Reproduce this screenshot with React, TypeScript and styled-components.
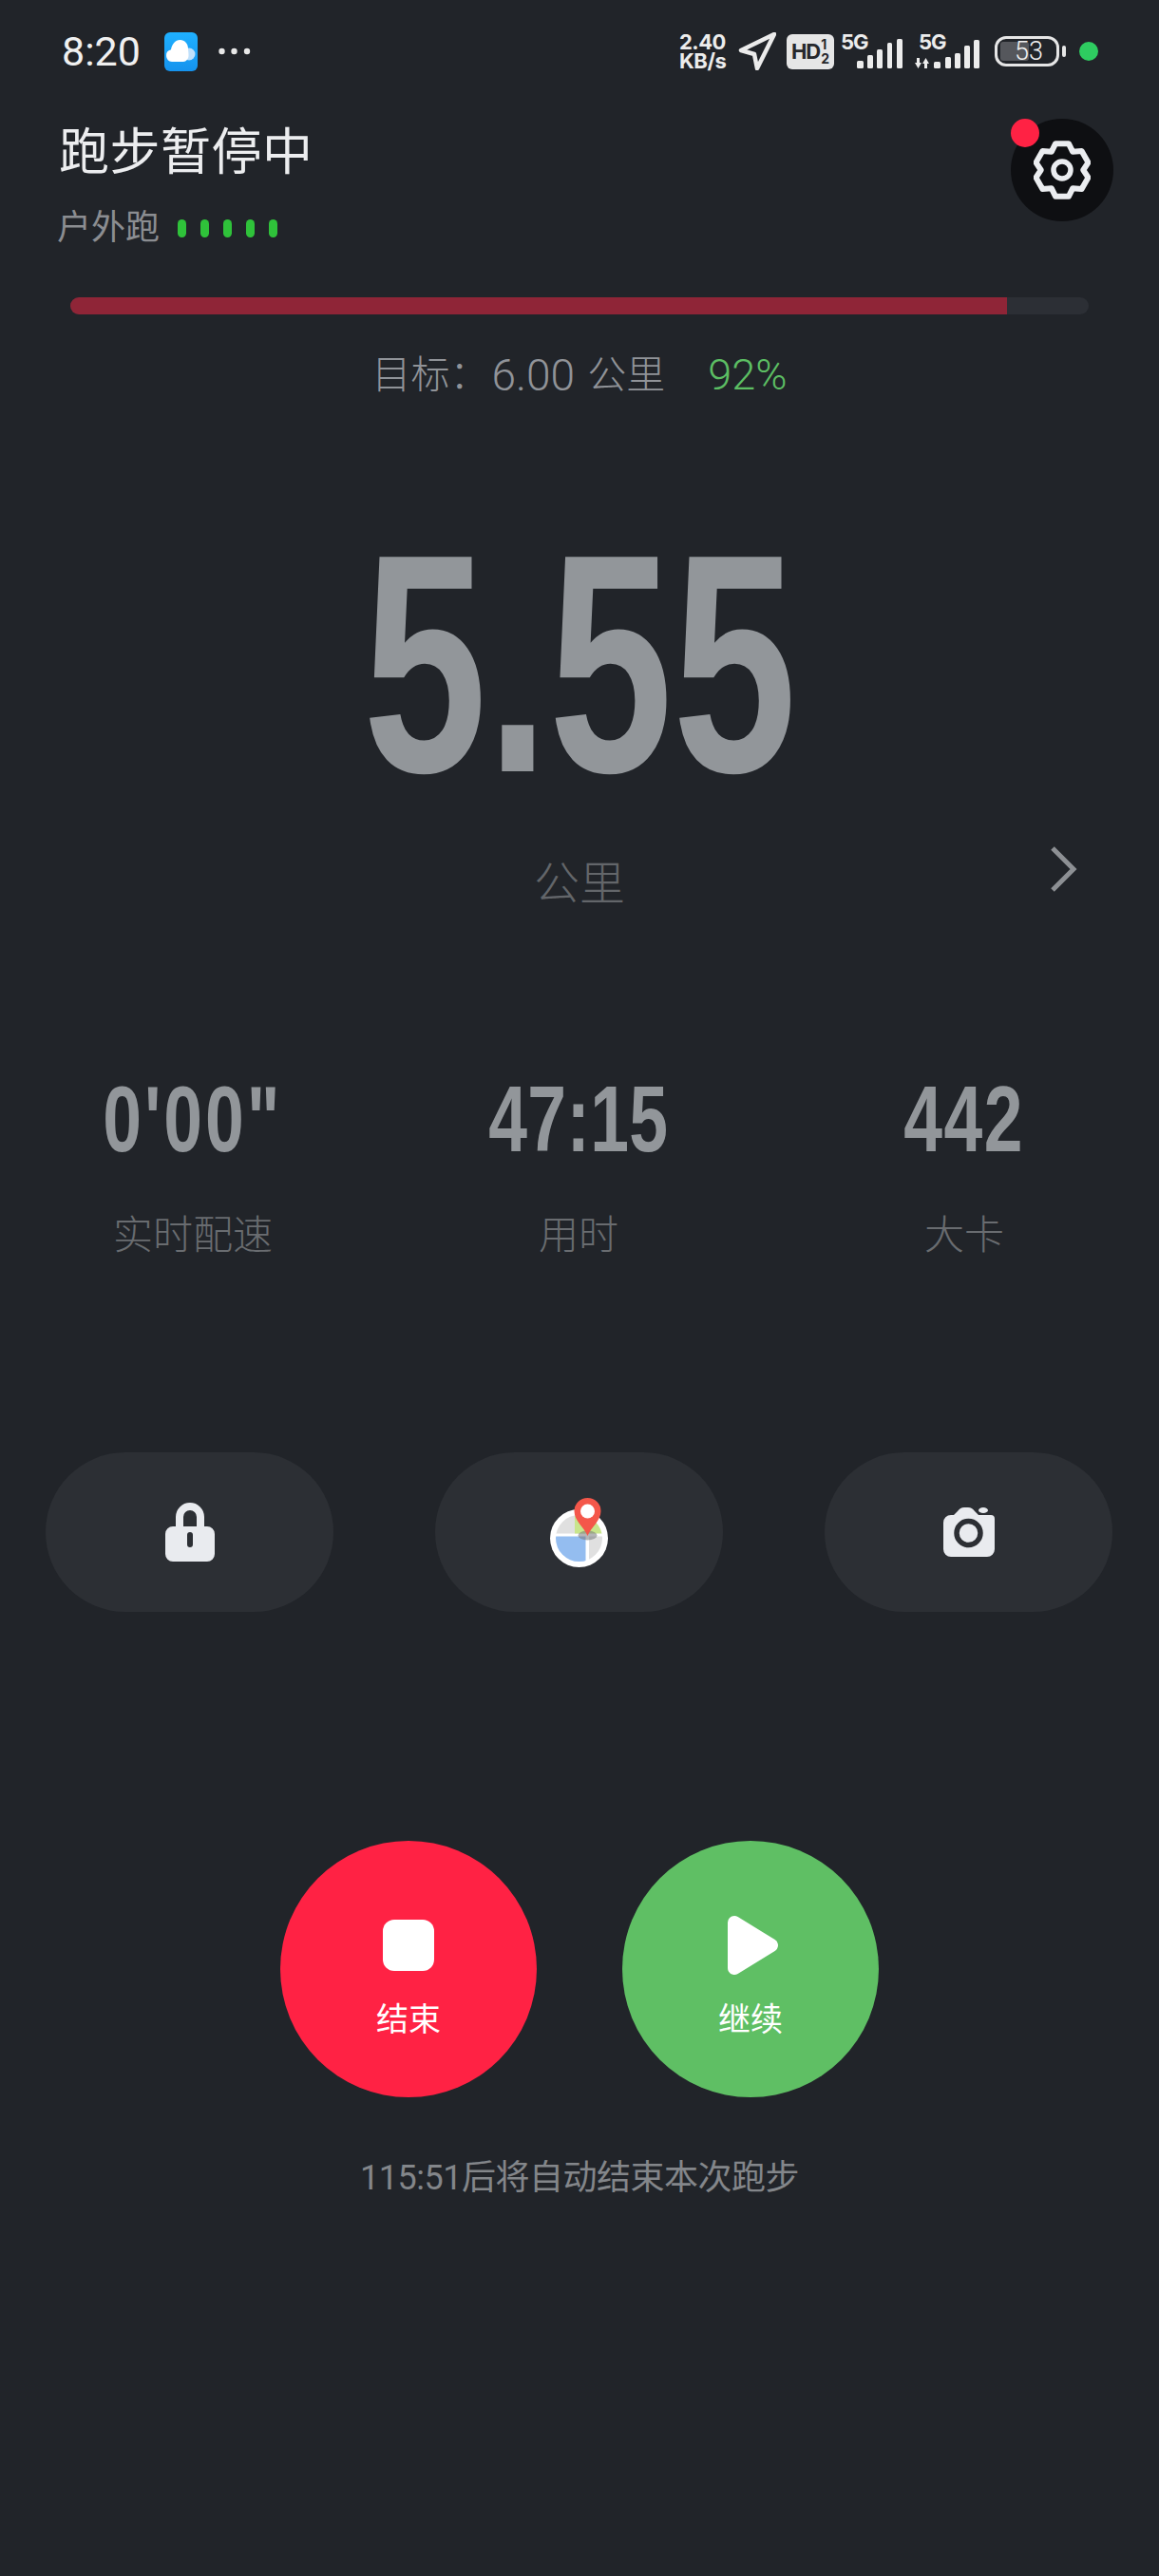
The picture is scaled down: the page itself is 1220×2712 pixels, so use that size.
import React from "react";
import styled, { createGlobalStyle } from "styled-components";

const GlobalStyle = createGlobalStyle`
  html, body {
    margin: 0;
    padding: 0;
    background: #212429;
  }
`;

const CJK = `Roboto, "Noto Sans CJK SC", sans-serif`;

const Page = styled.div`
  width: 1220px;
  height: 2712px;
  overflow: hidden;
  background: #212429;
  font-family: ${CJK};
  color: #8d9094;
`;

/* status bar */
const StatusBar = styled.div`
  height: 125px;
  box-sizing: border-box;
  padding: 0 64px 17px 65px;
  display: flex;
  align-items: center;
  justify-content: space-between;
`;
const StatusLeft = styled.div`
  display: flex;
  align-items: center;
`;
const Time = styled.span`
  font-size: 43px;
  color: #f0f0f0;
  width: 108px;
  line-height: 50px;
`;
const StatusRight = styled.div`
  display: flex;
  align-items: center;
`;
const Speed = styled.div`
  width: 53px;
  margin-right: 9px;
  font-family: Inter, sans-serif;
  font-weight: 700;
  color: #ececec;
  font-size: 22px;
  line-height: 20px;
  letter-spacing: -0.5px;
  white-space: nowrap;
`;
const HdBox = styled.div`
  width: 50px;
  height: 37px;
  margin: 0 7px 0 11px;
  border-radius: 6px;
  background: #e6e6e6;
  color: #26282c;
  display: flex;
  align-items: center;
  justify-content: center;
  gap: 1px;
  font-family: Inter, sans-serif;
  font-weight: 700;
`;
const HdText = styled.span`
  font-size: 22px;
  letter-spacing: -1px;
`;
const HdStack = styled.span`
  display: flex;
  flex-direction: column;
  font-size: 14px;
  line-height: 15px;
`;
const SignalGroup = styled.div<{ $w: number; $labelLeft: number; $gap: number }>`
  position: relative;
  width: ${(p) => p.$w}px;
  height: 36px;
  margin-right: ${(p) => p.$gap}px;

  span {
    position: absolute;
    left: ${(p) => p.$labelLeft}px;
    top: -4px;
    font-family: Inter, sans-serif;
    font-weight: 700;
    font-size: 22px;
    line-height: 24px;
    letter-spacing: -1px;
    color: #ececec;
  }
  svg {
    position: absolute;
    left: 0;
    bottom: 0;
  }
`;
const Battery = styled.div`
  position: relative;
  width: 68px;
  height: 32px;
  box-sizing: border-box;
  border: 3.5px solid #e6e6e6;
  border-radius: 12px;
  display: flex;
  align-items: center;
  justify-content: center;
  font-size: 27px;
  font-weight: 300;
  color: #f0f0f0;
  padding-left: 4px;
`;
const BatteryFill = styled.div`
  position: absolute;
  left: 3px;
  top: 3px;
  bottom: 3px;
  width: 30px;
  border-radius: 3px;
  background: #55575c;
`;
const BatteryLevel = styled.span`
  position: relative;
  line-height: 26px;
`;
const BatteryNub = styled.div`
  width: 4px;
  height: 12px;
  margin: 0 14px 0 3px;
  border-radius: 2px;
  background: #e6e6e6;
`;
const GreenDot = styled.div`
  width: 20px;
  height: 20px;
  border-radius: 50%;
  background: #2ecc60;
`;

/* header */
const Header = styled.div`
  display: flex;
  justify-content: space-between;
  align-items: flex-start;
  padding: 0 48px 0 62px;
`;
const Title = styled.h1`
  margin: 4px 0 0;
  font-size: 53px;
  line-height: 64px;
  font-weight: 400;
  letter-spacing: 0.5px;
  color: #ecedef;
`;
const SubRow = styled.div`
  display: flex;
  align-items: center;
  margin: 25px 0 0 -2px;
`;
const SubLabel = styled.span`
  font-size: 36px;
  line-height: 44px;
  color: #8b8d91;
`;
const Pips = styled.div`
  display: flex;
  gap: 15px;
  margin-left: 19px;
`;
const Pip = styled.i`
  display: block;
  width: 9px;
  height: 19px;
  border-radius: 5px;
  background: #2fc23a;
`;
const SettingsButton = styled.div`
  position: relative;
  width: 108px;
  height: 108px;
  border-radius: 50%;
  background: #0e0f12;
  display: flex;
  align-items: center;
  justify-content: center;
`;
const RedBadge = styled.div`
  position: absolute;
  left: 0;
  top: 0;
  width: 30px;
  height: 30px;
  border-radius: 50%;
  background: #ff2244;
`;

/* goal */
const ProgressTrack = styled.div`
  margin: 51px 74px 0;
  height: 18px;
  border-radius: 9px;
  background: #2c2f35;
  overflow: hidden;
`;
const ProgressFill = styled.div<{ $pct: number }>`
  width: ${(p) => p.$pct}%;
  height: 100%;
  background: #8f2537;
`;
const GoalRow = styled.div`
  margin-top: 39px;
  height: 50px;
  display: flex;
  justify-content: center;
  align-items: center;
  font-size: 41px;
  font-weight: 300;
  line-height: 50px;
  color: #909398;
  white-space: pre;
`;
const GoalDigits = styled.span`
  font-size: 46px;
  margin: 0 2px 0 3px;
`;
const GoalPct = styled.span`
  margin-left: 45px;
  font-size: 45px;
  color: #5cbe63;
`;

/* main distance */
const Distance = styled.div`
  margin-top: 124px;
  height: 310px;
  display: flex;
  justify-content: center;
  align-items: center;
`;
const Condensed = styled.span<{ $size: number; $x: number; $spacing?: number }>`
  display: inline-block;
  font-family: "Liberation Sans", Arial, sans-serif;
  font-weight: 700;
  font-size: ${(p) => p.$size}px;
  line-height: 1;
  letter-spacing: ${(p) => p.$spacing || 0}px;
  color: #92969a;
  transform: scaleX(${(p) => p.$x});
  white-space: nowrap;
`;
const UnitRow = styled.div`
  margin-top: 36px;
  display: grid;
  grid-template-columns: 1fr auto 1fr;
  align-items: center;
`;
const Unit = styled.span`
  font-size: 48px;
  line-height: 64px;
  font-weight: 300;
  color: #63666a;
`;
const ChevronCell = styled.div`
  justify-self: end;
  display: flex;
  padding: 0 86px 32px 0;
`;

/* stats */
const Stats = styled.div`
  margin-top: 161px;
  display: grid;
  grid-template-columns: repeat(3, 406px);
`;
const Stat = styled.div`
  display: flex;
  flex-direction: column;
  align-items: center;
`;
const StatValue = styled.div`
  height: 88px;
  display: flex;
  align-items: center;
`;
const StatLabel = styled.div`
  margin-top: 55px;
  font-size: 42px;
  line-height: 50px;
  font-weight: 300;
  color: #696c70;
`;

/* shortcut pills */
const PillRow = styled.div`
  margin-top: 203px;
  padding: 0 49px 0 48px;
  display: flex;
  justify-content: space-between;
`;
const Pill = styled.div`
  width: 303px;
  height: 168px;
  border-radius: 84px;
  background: #2c2f34;
  display: flex;
  align-items: center;
  justify-content: center;
`;

/* end / resume */
const Actions = styled.div`
  margin-top: 241px;
  display: flex;
  justify-content: center;
  gap: 90px;
`;
const ActionButton = styled.div<{ $bg: string }>`
  width: 270px;
  height: 270px;
  border-radius: 50%;
  background: ${(p) => p.$bg};
  box-sizing: border-box;
  padding-top: 78px;
  display: flex;
  flex-direction: column;
  align-items: center;
`;
const ActionIcon = styled.div`
  height: 64px;
  display: flex;
  align-items: center;
  justify-content: center;
`;
const ActionLabel = styled.div`
  margin-top: 26px;
  font-size: 34px;
  line-height: 40px;
  color: #fff;
`;
const Notice = styled.div`
  margin-top: 60px;
  text-align: center;
  font-size: 36px;
  line-height: 50px;
  letter-spacing: -0.5px;
  color: #83868a;
`;

const gearPath = (() => {
  const pts: string[] = [];
  for (let k = 0; k < 6; k++) {
    const a = k * 60 - 90;
    [
      [21, -30],
      [27, -14],
      [27, 14],
      [21, 30],
    ].forEach(([r, d]) => {
      const t = ((a + d) * Math.PI) / 180;
      pts.push(`${(30 + r * 1.06 * Math.cos(t)).toFixed(1)} ${(32 + r * 1.06 * Math.sin(t)).toFixed(1)}`);
    });
  }
  return "M" + pts.join("L") + "Z";
})();

const Gear = () => (
  <svg width="60" height="64" viewBox="0 0 60 64" fill="none" stroke="#ebedf0">
    <path d={gearPath} strokeWidth="6" strokeLinejoin="round" />
    <circle cx="30" cy="32" r="9" strokeWidth="5.5" />
  </svg>
);

const CloudApp = () => (
  <svg width="35" height="41" viewBox="0 0 35 41">
    <defs>
      <linearGradient id="cloudBg" x1="0" y1="0" x2="0" y2="1">
        <stop offset="0" stopColor="#1fb0ff" />
        <stop offset="1" stopColor="#1593ee" />
      </linearGradient>
    </defs>
    <rect width="35" height="41" rx="6" fill="url(#cloudBg)" />
    <circle cx="26" cy="23" r="6.5" fill="#bfe0fb" />
    <path d="M8 31a6.5 6.5 0 0 1-1-12.8C8 12.5 11.5 8 16.500 8c5 0 8.500 4 8.500 9 0 2 .5 4 .5 7.500S23 31 20 31Z" fill="#fff" />
  </svg>
);

const MoreDots = () => (
  <svg width="34" height="8" viewBox="0 0 34 8" style={{ marginLeft: 22 }} fill="#e8e8e8">
    <circle cx="3.500" cy="4" r="3.200" />
    <circle cx="16.500" cy="4" r="3.200" />
    <circle cx="30" cy="4" r="3.200" />
  </svg>
);

const LocationArrow = () => (
  <svg width="40" height="40" viewBox="0 0 40 40" fill="none">
    <path d="M38 2 3 19l14 4 3 15Z" stroke="#ebebeb" strokeWidth="4.500" strokeLinejoin="round" />
  </svg>
);

const Bars = ({ bars, w, h, arrows }: { bars: [number, number, number][]; w: number; h: number; arrows?: boolean }) => (
  <svg width={w} height={h} viewBox={`0 0 ${w} ${h}`} fill="#ececec">
    {arrows && <path d={`M2 ${h - 11}h3v5h2l-3.500 6L0 ${h - 6}h2ZM11.500 ${h - 11}l3.500 6h-2v5h-3v-5H8Z`} />}
    {bars.map(([x, bw, bh]) => (
      <rect key={x} x={x} y={h - bh} width={bw} height={bh} rx="1.500" />
    ))}
  </svg>
);

const Chevron = () => (
  <svg width="30" height="50" viewBox="0 0 30 50" fill="none">
    <path d="M4 3 26 25 4 47" stroke="#8d9094" strokeWidth="5" />
  </svg>
);

const LockIcon = () => (
  <svg width="52" height="62" viewBox="0 0 52 62" fill="#e9ebef">
    <path
      fillRule="evenodd"
      d="M11 25V15a15 15 0 0 1 30 0v10h3a8 8 0 0 1 8 8v21a8 8 0 0 1-8 8H8a8 8 0 0 1-8-8V33a8 8 0 0 1 8-8ZM19 25h14V15a7 7 0 0 0-14 0ZM26 31a3 3 0 0 0-3 3v10a3 3 0 0 0 6 0V34a3 3 0 0 0-3-3Z"
    />
  </svg>
);

const CameraIcon = () => (
  <svg width="54" height="52" viewBox="0 0 54 52" fill="#e9ebef">
    <path d="M8 8h3l4-4c2-2.500 4-4 7-4h4c3 0 5 1.500 7 4l4 4h13a4 4 0 0 1 4 4v32a8 8 0 0 1-8 8H8a8 8 0 0 1-8-8V16a8 8 0 0 1 8-8Z" />
    <ellipse cx="42" cy="3" rx="5" ry="3" />
    <circle cx="26.500" cy="27" r="12.500" fill="none" stroke="#2c2f34" strokeWidth="5.500" />
  </svg>
);

const MapIcon = () => (
  <svg width="61" height="73" viewBox="0 0 61 73">
    <defs>
      <clipPath id="mapInner">
        <circle cx="30.500" cy="42.500" r="24.500" />
      </clipPath>
    </defs>
    <circle cx="30.500" cy="42.500" r="30.500" fill="#fff" />
    <g clipPath="url(#mapInner)">
      <rect x="0" y="10" width="37" height="27.500" fill="#e0e0e0" />
      <rect x="26" y="10" width="45" height="27.500" fill="#c8e58c" />
      <rect x="0" y="40.500" width="37.500" height="30" fill="#94bdf0" />
      <rect x="41" y="40.500" width="30" height="30" fill="#e0e0e0" />
    </g>
    <ellipse cx="39.500" cy="39.500" rx="10" ry="5" fill="#77797c" opacity="0.55" />
    <path d="M39.500 40C36 31 25.500 24 25.500 14a14 14 0 0 1 28 0C53.500 24 43 31 39.500 40Z" fill="#f4574a" />
    <circle cx="39.500" cy="14" r="7.500" fill="#fff" />
  </svg>
);

const StopIcon = () => (
  <svg width="54" height="54" viewBox="0 0 54 54">
    <rect width="54" height="54" rx="12" fill="#fff" />
  </svg>
);

const PlayIcon = () => (
  <svg width="55" height="64" viewBox="0 0 55 64" style={{ marginLeft: 4 }}>
    <path d="M8 8 47 32 8 56Z" fill="#fff" stroke="#fff" strokeWidth="14" strokeLinejoin="round" />
  </svg>
);

const stats = [
  { value: "0'00\"", label: "实时配速", spacing: 4 },
  { value: "47:15", label: "用时", spacing: 0.5 },
  { value: "442", label: "大卡", spacing: 2 },
];

export default function App() {
  return (
    <Page>
      <GlobalStyle />
      <StatusBar>
        <StatusLeft>
          <Time>8:20</Time>
          <CloudApp />
          <MoreDots />
        </StatusLeft>
        <StatusRight>
          <Speed>
            2.40
            <br />
            KB/s
          </Speed>
          <LocationArrow />
          <HdBox>
            <HdText>HD</HdText>
            <HdStack>
              <span>1</span>
              <span>2</span>
            </HdStack>
          </HdBox>
          <SignalGroup $w={65} $labelLeft={0} $gap={13}>
            <span>5G</span>
            <Bars
              w={65}
              h={32}
              bars={[
                [17, 7, 8],
                [28, 6, 14],
                [38, 6, 20],
                [49, 5, 27],
                [59, 6, 31],
              ]}
            />
          </SignalGroup>
          <SignalGroup $w={69} $labelLeft={4} $gap={15}>
            <span>5G</span>
            <Bars
              w={69}
              h={32}
              arrows
              bars={[
                [20, 7, 7],
                [32, 6, 12],
                [42, 6, 16],
                [52, 6, 24],
                [62, 6, 30],
              ]}
            />
          </SignalGroup>
          <Battery>
            <BatteryFill />
            <BatteryLevel>53</BatteryLevel>
          </Battery>
          <BatteryNub />
          <GreenDot />
        </StatusRight>
      </StatusBar>

      <Header>
        <div>
          <Title>跑步暂停中</Title>
          <SubRow>
            <SubLabel>户外跑</SubLabel>
            <Pips>
              {[0, 1, 2, 3, 4].map((i) => (
                <Pip key={i} />
              ))}
            </Pips>
          </SubRow>
        </div>
        <SettingsButton>
          <RedBadge />
          <Gear />
        </SettingsButton>
      </Header>

      <ProgressTrack>
        <ProgressFill $pct={92} />
      </ProgressTrack>
      <GoalRow>
        目标：
        <GoalDigits>6.00 </GoalDigits>
        公里
        <GoalPct>92%</GoalPct>
      </GoalRow>

      <Distance>
        <Condensed $size={328} $x={0.715}>
          5.55
        </Condensed>
      </Distance>
      <UnitRow>
        <span />
        <Unit>公里</Unit>
        <ChevronCell>
          <Chevron />
        </ChevronCell>
      </UnitRow>

      <Stats>
        {stats.map((s) => (
          <Stat key={s.label}>
            <StatValue>
              <Condensed $size={99} $x={0.74} $spacing={s.spacing}>
                {s.value}
              </Condensed>
            </StatValue>
            <StatLabel>{s.label}</StatLabel>
          </Stat>
        ))}
      </Stats>

      <PillRow>
        <Pill>
          <LockIcon />
        </Pill>
        <Pill>
          <MapIcon />
        </Pill>
        <Pill>
          <CameraIcon />
        </Pill>
      </PillRow>

      <Actions>
        <ActionButton $bg="#ff2244">
          <ActionIcon>
            <StopIcon />
          </ActionIcon>
          <ActionLabel>结束</ActionLabel>
        </ActionButton>
        <ActionButton $bg="#5fbf64">
          <ActionIcon>
            <PlayIcon />
          </ActionIcon>
          <ActionLabel>继续</ActionLabel>
        </ActionButton>
      </Actions>
      <Notice>115:51后将自动结束本次跑步</Notice>
    </Page>
  );
}
